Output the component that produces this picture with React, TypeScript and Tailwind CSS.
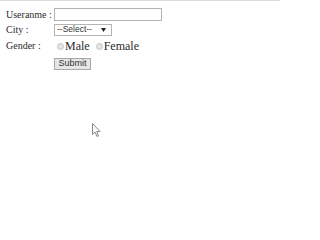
export default function App() {
  return (
    <div className="relative h-[217px] w-[280px] overflow-hidden border-t border-[#dcdcdc] bg-white font-['Liberation_Serif',serif] text-[10px] text-[#2b2b2b]">
      <div className="grid grid-cols-[48px_auto] grid-rows-[15px_15px_18px_17px] items-center pl-[6px] pt-[6px]">
        <span className="whitespace-nowrap leading-[12px]">Useranme :</span>
        <input
          type="text"
          className="h-[13px] w-[108px] border border-[#b4b4b4] bg-white outline-none"
        />
        <span className="whitespace-nowrap leading-[12px]">City :</span>
        <div className="flex h-[12px] w-[58px] items-center justify-between border border-[#b4b4b4] bg-white pl-[2px] pr-[5px] font-['Liberation_Sans',sans-serif] text-[8.5px] leading-none text-[#333]">
          <span>--Select--</span>
          <svg width="5" height="4" viewBox="0 0 5 4">
            <path d="M0 0 L5 0 L2.5 4 Z" fill="#222" />
          </svg>
        </div>
        <span className="whitespace-nowrap leading-[12px]">Gender :</span>
        <div className="flex items-center pl-[3px] text-[12px] leading-[14px]">
          <span className="mr-[1px] h-[7px] w-[7px] rounded-full border border-[#c4c4c4] bg-[#e4e4e4]" />
          <span className="mr-[6px]">Male</span>
          <span className="mr-[1px] h-[7px] w-[7px] rounded-full border border-[#c4c4c4] bg-[#e4e4e4]" />
          <span>Female</span>
        </div>
        <span />
        <button className="flex h-[12px] w-[37px] items-center justify-center border border-[#a8a8a8] bg-[#e6e6e6] font-['Liberation_Sans',sans-serif] text-[9px] leading-none text-[#333]">
          Submit
        </button>
      </div>
      <svg
        className="absolute left-[92px] top-[122px]"
        width="10"
        height="15"
        viewBox="0 0 10 15"
      >
        <path
          d="M0.5 0.5 L0.5 11.5 L3 9 L5 13.5 L6.5 13 L4.7 8.5 L8 8.5 Z"
          fill="white"
          stroke="#888"
          strokeWidth="1"
        />
      </svg>
    </div>
  );
}
